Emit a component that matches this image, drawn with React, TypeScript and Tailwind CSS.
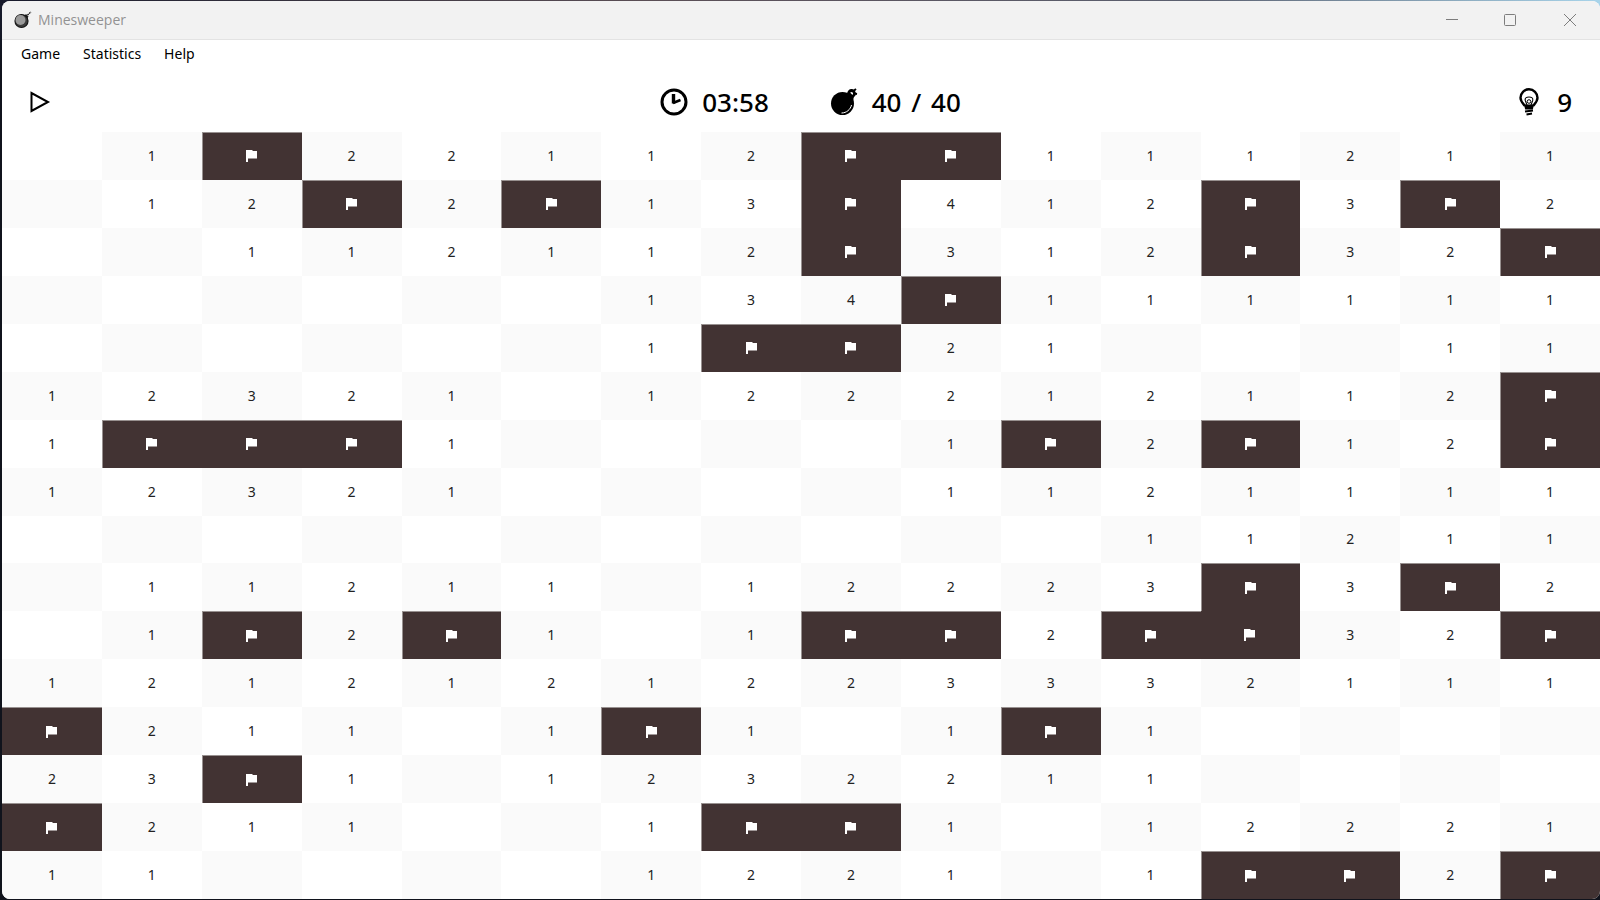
import clsx from "clsx";

const FLAG = "F";

// One string per row: digit = neighbouring mines, "." = empty, "F" = flagged.
const BOARD = [
  ".1F22112FF111211",
  ".12F2F13F412F3F2",
  "..112112F312F32F",
  "......134F111111",
  "......1FF21...11",
  "12321.122212112F",
  "1FFF1....1F2F12F",
  "12321....1121111",
  "...........11211",
  ".11211.12223F3F2",
  ".1F2F1.1FF2FF32F",
  "1212121223332111",
  "F211.1F1.1F1....",
  "23F1.1232211....",
  "F211..1FF1.12221",
  "11....1221.1FF2F",
];

const isFlag = (row: number, col: number) => BOARD[row]?.[col] === FLAG;

function FlagIcon() {
  return (
    <svg width="12" height="12" viewBox="0 0 12 12" aria-hidden="true">
      <path d="M0 0h6.500v1H11v7.500H2V12H0z" fill="#fff" />
    </svg>
  );
}

function Cell({ row, col }: { row: number; col: number }) {
  const value = BOARD[row][col];
  const flagged = value === FLAG;
  return (
    <button
      type="button"
      aria-label={flagged ? `Row ${row + 1}, column ${col + 1}, flagged` : undefined}
      className={clsx(
        "flex min-w-0 items-center justify-center text-sm leading-5",
        flagged
          ? "border-[#989190] bg-[#423333] text-white"
          : (row + col) % 2 === 1
            ? "bg-[#fafafa] text-[#222222]"
            : "bg-white text-[#222222]",
        flagged && !isFlag(row - 1, col) && "border-t",
        flagged && !isFlag(row, col - 1) && col > 0 && "border-l",
      )}
    >
      {flagged ? <FlagIcon /> : value === "." ? null : value}
    </button>
  );
}

function AppIcon() {
  return (
    <svg width="18" height="18" viewBox="0 0 18 18" aria-hidden="true">
      <path d="M10 5 12 3l2.500 2.500L13 8z" fill="#222" />
      <path d="M13.500 4 17 .8" stroke="#111" strokeWidth="1.300" strokeDasharray="1.600 .7" />
      <circle cx="7.500" cy="10" r="6.500" fill="#3c3c3c" stroke="#151515" strokeWidth="1.200" />
      <circle cx="6.500" cy="9" r="5" fill="#9a9a9a" />
    </svg>
  );
}

function ClockIcon() {
  return (
    <svg width="28" height="28" viewBox="0 0 28 28" fill="none" stroke="#000" aria-hidden="true">
      <circle cx="14" cy="14" r="12" strokeWidth="3" />
      <path d="M13.500 6v9.500" strokeWidth="3.400" />
      <path d="M13 15 20.500 12" strokeWidth="2.800" />
    </svg>
  );
}

function BombIcon() {
  return (
    <svg width="28" height="28" viewBox="0 0 28 28" fill="none" aria-hidden="true">
      <circle cx="12.500" cy="15.500" r="11.500" fill="#000" />
      <path d="M17 5.500 20 4.500l4 4-1 4z" fill="#000" />
      <circle cx="21.500" cy="5.500" r="3" stroke="#000" strokeWidth="2.800" />
      <path d="M23.500 3 26 1M24.500 5.500l2.500 .5" stroke="#000" strokeWidth="2" />
      <path d="M11.500 25c5 0 9-3.500 10-8" stroke="#fff" strokeWidth="1" />
    </svg>
  );
}

function BulbIcon() {
  return (
    <svg width="20" height="28" viewBox="0 0 20 28" fill="none" stroke="#000" aria-hidden="true">
      <path
        d="M6 18C4 15.500 1.500 13.500 1.500 9.800a8.500 8.500 0 0 1 17 0c0 3.700-2.500 5.700-4.500 8.200"
        strokeWidth="2.400"
      />
      <path d="M8 17 6.300 12.500C5.500 9.500 8 9 10 9s4.500.5 3.700 3.500L12 17" strokeWidth="1.100" />
      <circle cx="10" cy="13.500" r="1.800" strokeWidth="1" />
      <path d="M5 16.500h10l-1.200 5H6.200z" fill="#000" stroke="none" />
      <path d="M6 23.600 14 22.600M7.500 26.500l5.500-1" strokeWidth="2" />
    </svg>
  );
}

function WindowControls() {
  return (
    <div className="flex h-full text-[#7d7d7d]">
      <button type="button" aria-label="Minimize" className="flex w-14 items-center justify-center">
        <svg width="12" height="12" viewBox="0 0 12 12" stroke="currentColor">
          <path d="M0 5.500h12" />
        </svg>
      </button>
      <button type="button" aria-label="Maximize" className="flex w-15 items-center justify-center">
        <svg width="12" height="12" viewBox="0 0 12 12" fill="none" stroke="currentColor">
          <rect x=".5" y=".5" width="11" height="11" rx="1" />
        </svg>
      </button>
      <button type="button" aria-label="Close" className="flex w-15 items-center justify-center">
        <svg width="12" height="12" viewBox="0 0 12 12" stroke="currentColor">
          <path d="M0 0l12 12M12 0 0 12" />
        </svg>
      </button>
    </div>
  );
}

export default function App() {
  return (
    <div className="h-screen bg-[linear-gradient(to_right,#171a2b,#5a4e55_40%,#5b6070_75%,#a8d4ea)] font-['Noto_Sans',sans-serif] text-black">
      <div className="h-full bg-[linear-gradient(to_bottom,transparent_1%,#10131c_8%)] pt-px pb-px pl-0.5">
        <div className="flex h-full flex-col overflow-hidden rounded-lg bg-white">
          <header className="flex h-[39px] shrink-0 items-center justify-between border-b border-[#e3e3e3] bg-[#f2f2f2] pl-3">
            <div className="flex items-center gap-1.5">
              <AppIcon />
              <h1 className="font-['Open_Sans',sans-serif] text-[14px] leading-5 text-[#929292]">Minesweeper</h1>
            </div>
            <WindowControls />
          </header>

          <nav className="flex h-7 shrink-0 items-center gap-[23px] pl-[19px] text-[14px] leading-5">
            <button type="button">Game</button>
            <button type="button">Statistics</button>
            <button type="button">Help</button>
          </nav>

          <section className="grid h-16 shrink-0 grid-cols-[1fr_auto_1fr] items-center pt-1 pr-7 pl-[27px] text-[26px] leading-8 font-medium">
            <button type="button" aria-label="New game" className="justify-self-start">
              <svg width="22" height="22" viewBox="0 0 22 22" fill="none" aria-hidden="true">
                <path d="M2.500 2v18L19 11z" stroke="#000" strokeWidth="2" />
              </svg>
            </button>
            <div className="flex items-center gap-[61px] pl-5">
              <div className="flex items-center gap-3.5">
                <ClockIcon />
                <span>03:58</span>
              </div>
              <div className="flex items-center gap-3.5">
                <BombIcon />
                <span>
                  40 <span className="mx-[3px]">/</span> 40
                </span>
              </div>
            </div>
            <button type="button" aria-label="Hint, 9 left" className="flex items-center gap-[18px] justify-self-end">
              <BulbIcon />
              <span>9</span>
            </button>
          </section>

          <main className="grid min-h-0 flex-1 grid-cols-16 grid-rows-16">
            {BOARD.map((cells, row) =>
              Array.from(cells, (_, col) => <Cell key={`${row}-${col}`} row={row} col={col} />),
            )}
          </main>
        </div>
      </div>
    </div>
  );
}
